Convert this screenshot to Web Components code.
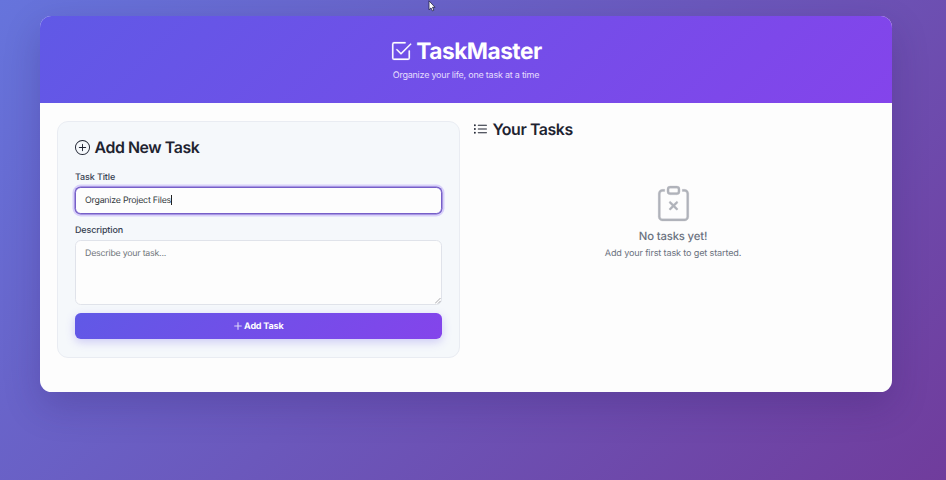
<!DOCTYPE html>
<html lang="en">
<head>
<meta charset="utf-8">
<title>TaskMaster</title>
<style>
html{height:100%}
body{margin:0;height:480px;overflow:hidden;background:linear-gradient(135deg,#6674dc 0%,#703c9c 100%);font-family:Inter,"Liberation Sans",sans-serif;color:#1e2330;text-rendering:geometricPrecision}
</style>
</head>
<body>
<task-app></task-app>
<script>
const define = (name, html, setup) => customElements.define(name, class extends HTMLElement {
  connectedCallback() {
    if (this.shadowRoot) return;
    const root = this.attachShadow({ mode: 'open' });
    const t = document.createElement('template');
    t.innerHTML = html;
    if (setup) setup.call(this, t.content);
    root.append(t.content.cloneNode(true));
  }
});

const ICONS = {
  check: '<path d="M3 14.5A1.5 1.5 0 0 1 1.5 13V3A1.5 1.5 0 0 1 3 1.5h8a.5.5 0 0 1 0 1H3a.5.5 0 0 0-.5.5v10a.5.5 0 0 0 .5.5h10a.5.5 0 0 0 .5-.5V8a.5.5 0 0 1 1 0v5a1.5 1.5 0 0 1-1.5 1.5z"/><path d="m8.354 10.354 7-7a.5.5 0 0 0-.708-.708L8 9.293 5.354 6.646a.5.5 0 1 0-.708.708l3 3a.5.5 0 0 0 .708 0"/>',
  circle: '<path d="M8 15A7 7 0 1 1 8 1a7 7 0 0 1 0 14m0 1A8 8 0 1 0 8 0a8 8 0 0 0 0 16"/><path d="M8 4a.5.5 0 0 1 .5.5v3h3a.5.5 0 0 1 0 1h-3v3a.5.5 0 0 1-1 0v-3h-3a.5.5 0 0 1 0-1h3v-3A.5.5 0 0 1 8 4"/>',
  list: '<path fill-rule="evenodd" d="M5 11.5a.5.5 0 0 1 .5-.5h9a.5.5 0 0 1 0 1h-9a.5.5 0 0 1-.5-.5m0-4a.5.5 0 0 1 .5-.5h9a.5.5 0 0 1 0 1h-9a.5.5 0 0 1-.5-.5m0-4a.5.5 0 0 1 .5-.5h9a.5.5 0 0 1 0 1h-9a.5.5 0 0 1-.5-.5m-3 1a1 1 0 1 0 0-2 1 1 0 0 0 0 2m0 4a1 1 0 1 0 0-2 1 1 0 0 0 0 2m0 4a1 1 0 1 0 0-2 1 1 0 0 0 0 2"/>',
  plus: '<path d="M8 2a.5.5 0 0 1 .5.5v5h5a.5.5 0 0 1 0 1h-5v5a.5.5 0 0 1-1 0v-5h-5a.5.5 0 0 1 0-1h5v-5A.5.5 0 0 1 8 2"/>',
  clipboard: '<path fill-rule="evenodd" d="M6.146 7.146a.5.5 0 0 1 .708 0L8 8.293l1.146-1.147a.5.5 0 1 1 .708.708L8.707 9l1.147 1.146a.5.5 0 0 1-.708.708L8 9.707l-1.146 1.147a.5.5 0 0 1-.708-.708L7.293 9 6.146 7.854a.5.5 0 0 1 0-.708"/><path d="M4 1.5H3a2 2 0 0 0-2 2V14a2 2 0 0 0 2 2h10a2 2 0 0 0 2-2V3.5a2 2 0 0 0-2-2h-1v1h1a1 1 0 0 1 1 1V14a1 1 0 0 1-1 1H3a1 1 0 0 1-1-1V3.5a1 1 0 0 1 1-1h1z"/><path d="M9.5 1a.5.5 0 0 1 .5.5v1a.5.5 0 0 1-.5.5h-3a.5.5 0 0 1-.5-.5v-1a.5.5 0 0 1 .5-.5zm-3-1A1.5 1.5 0 0 0 5 1.5v1A1.5 1.5 0 0 0 6.5 4h3A1.5 1.5 0 0 0 11 2.5v-1A1.5 1.5 0 0 0 9.5 0z"/>'
};

define('task-icon', `<style>
:host{display:block;flex:none;width:var(--s,16px);height:var(--s,16px)}
svg{display:block;width:100%;height:100%;fill:currentColor;stroke:currentColor;stroke-width:var(--w,0)}
</style><svg viewBox="0 0 16 16" overflow="visible"></svg>`, function (content) {
  content.querySelector('svg').innerHTML = ICONS[this.getAttribute('name')];
});

define('app-header', `<style>
:host{display:block;box-sizing:border-box;height:87px;padding-top:18px;color:#fff;background:linear-gradient(135deg,#6059e6 0%,#8444eb 100%)}
h1{display:flex;justify-content:center;align-items:center;gap:4px;margin:0;height:33px;font-size:22.7px;letter-spacing:-.5px;font-weight:700;line-height:33px}
h1 span{padding-top:2px}
task-icon{--s:22px;--w:.15}
p{margin:0;padding-top:1px;height:16px;line-height:16px;font-size:9px;letter-spacing:-.23px;text-align:center;color:#e5defd}
</style><h1><task-icon name="check"></task-icon><span><slot></slot></span></h1><p><slot name="tagline"></slot></p>`);

define('section-title', `<style>
:host{display:block}
h2{display:flex;align-items:center;gap:4.5px;margin:0;font-size:15.9px;letter-spacing:-.42px;font-weight:600;line-height:22px;color:#1e2330}
h2 span{padding-top:1px;margin-bottom:-1px}
task-icon{--s:15px}
</style><h2><task-icon></task-icon><span><slot></slot></span></h2>`, function (content) {
  content.querySelector('task-icon').setAttribute('name', this.getAttribute('icon'));
});

define('task-field', `<style>
:host{display:block}
label{display:block;height:14px;line-height:15px;padding-top:1px;font-size:9px;letter-spacing:-.13px;font-weight:500;color:#374151;margin-bottom:3px}
.box{display:block;box-sizing:border-box;width:100%;border:1px solid #e0e3ea;border-radius:5.7px;background:#fdfdfd;font-size:8.8px;letter-spacing:-.22px;padding:7px 9px;line-height:12px;color:#343a40}
:host([focused]) .box{height:27px;border:1px solid #765fc8;padding:7px 9px;box-shadow:0 0 0 .5px #765fc8,0 0 0 2.5px #d8d0fa}
:host([multiline]) .box{height:65px;position:relative;color:#70757b;padding-top:7px}
.caret{display:none;width:1px;height:10px;background:#222;vertical-align:-2px}
:host([focused]) .caret{display:inline-block}
svg{display:none;position:absolute;right:0;bottom:0;width:6px;height:6px}
:host([multiline]) svg{display:block}
</style><label><slot name="label"></slot></label><div class="box"><slot></slot><span class="caret"></span><svg viewBox="0 0 6 6" fill="none" stroke="#94969a" stroke-width=".8"><path d="M0 5.5 5.5 0M3 5.5 5.5 3"/></svg></div>`);

define('action-button', `<style>
:host{display:block}
button{display:flex;box-sizing:border-box;width:100%;height:26px;align-items:center;justify-content:center;gap:1px;border:0;border-radius:5.7px;padding:0;font:700 9px Inter,sans-serif;letter-spacing:-.18px;text-rendering:geometricPrecision;color:#fff;background:linear-gradient(135deg,#6059e6 0%,#8444eb 100%);box-shadow:0 3px 10px rgba(99,82,235,.28)}
button span{padding-top:1px}
task-icon{--s:10px;--w:.3}
</style><button><task-icon name="plus"></task-icon><span><slot></slot></span></button>`);

define('task-form', `<style>
:host{display:flex;flex-direction:column;flex:none;box-sizing:border-box;width:402.5px;height:236.5px;padding:14px 17px 0;border:1px solid #e9ecf2;border-radius:11px;background:#f5f8fb}
section-title{margin-bottom:11px}
task-field[focused]{margin-bottom:8px}
task-field[multiline]{margin-bottom:8px}
</style><section-title icon="circle">Add New Task</section-title>
<task-field focused><span slot="label">Task Title</span>Organize Project Files</task-field>
<task-field multiline><span slot="label">Description</span>Describe your task...</task-field>
<action-button>Add Task</action-button>`);

define('empty-state', `<style>
:host{display:flex;flex-direction:column;align-items:center;color:#6b7280}
task-icon{--s:35px;--w:.12;color:#b0b3ba}
h3{margin:7px 0 0;font-size:11.3px;letter-spacing:-.15px;font-weight:500;line-height:16px}
p{margin:3px 0 0;font-size:9.1px;letter-spacing:-.15px;line-height:14px}
</style><task-icon name="clipboard"></task-icon><h3>No tasks yet!</h3><p>Add your first task to get started.</p>`);

define('task-list', `<style>
:host{display:flex;flex-direction:column;flex:1}
section-title{margin-top:-3px}
empty-state{margin:46px 2px 0 0}
</style><section-title icon="list">Your Tasks</section-title><empty-state></empty-state>`);

define('mouse-pointer', `<style>
:host{position:absolute;left:428px;top:0;width:8px;height:12px}
svg{display:block}
</style><svg width="8" height="12" viewBox="0 0 8 12"><path d="M1 .8v9l2-1.9 1.4 3 1.5-.7-1.4-2.9H7z" fill="#fff" stroke="#222244" stroke-width=".8"/></svg>`);

define('task-app', `<style>
:host{display:block;padding:16px 0 0 40px}
main{width:852px;height:376px;border-radius:11.4px;overflow:hidden;background:#fdfdfd}
.frame{width:852px;border-radius:11.4px;box-shadow:0 14px 36px rgba(40,20,90,.22)}
.content{display:flex;gap:13.5px;padding:18px 17px}
</style><div class="frame"><main><app-header>TaskMaster<span slot="tagline">Organize your life, one task at a time</span></app-header>
<div class="content"><task-form></task-form><task-list></task-list></div></main></div><mouse-pointer></mouse-pointer>`);
</script>
</body>
</html>
